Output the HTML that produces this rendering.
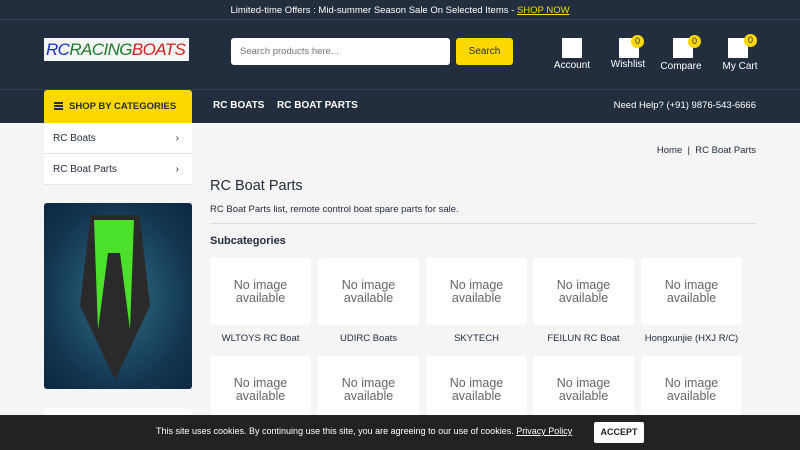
<!DOCTYPE html><html><head><meta charset="utf-8"><style>
*{margin:0;padding:0;box-sizing:border-box}
body{width:800px;height:450px;overflow:hidden;background:#f5f5f5;font-family:"Liberation Sans",sans-serif;position:relative;color:#222d3e}
.a{position:absolute}
.top{left:0;top:0;width:800px;height:20px;background:#222d3e;color:#fff;font-size:9.5px;text-align:center;line-height:22px;border-bottom:1px solid #333f52}
.top u{color:#ffd800}
.hdr{left:0;top:20px;width:800px;height:70px;background:#222d3e;border-bottom:1px solid #333f52}
.nav{left:0;top:90px;width:800px;height:33px;background:#222d3e}
.logo{left:44px;top:38px;width:145px;height:23px;background:#f4f6f6;font-style:italic;font-size:17px;line-height:23px;padding-left:2px;letter-spacing:-0.6px;overflow:hidden;white-space:nowrap}
.srch{left:231px;top:38px;width:219px;height:27px;background:#fff;border-radius:3px;font-size:9.5px;color:#777;line-height:27px;padding-left:9px}
.btn{left:456px;top:38px;width:57px;height:27px;background:#ffd800;border-radius:3px;font-size:10px;line-height:27px;text-align:center;color:#222d3e}
.ic{width:20px;height:20px;background:#fff}
.lb{color:#fff;font-size:10px;text-align:center;width:60px}
.bd{width:13px;height:13px;border-radius:50%;background:#ffd800;color:#222d3e;font-size:9px;text-align:center;line-height:13px}
.cat{left:44px;top:90px;width:148px;height:33px;background:#ffd800;border-radius:3px 3px 0 0;font-size:9.5px;font-weight:bold;line-height:34px;padding-left:25px}
.nl{color:#fff;font-size:10px;font-weight:bold;top:100px}
.mi{left:44px;width:148px;height:31px;background:#fff;font-size:10px;line-height:31px;padding-left:9px;border-bottom:1px solid #e5e5e5}
.mi span{position:absolute;right:13px}
.card{width:101px;height:67px;background:#fff;border-radius:3px;text-align:center;font-size:12.5px;color:#666;line-height:13px;padding-top:21px}
.cl{width:101px;text-align:center;font-size:9.5px}
.ck{left:0;top:415px;width:800px;height:35px;background:#222;color:#fff;font-size:10px}
</style></head><body>
<div class="a top">Limited-time Offers : Mid-summer Season Sale On Selected Items - <u>SHOP NOW</u></div>
<div class="a hdr"></div><div class="a nav"></div>
<div class="a logo"><span style="color:#1a2ccf">RC</span><span style="color:#1d7a2a">RACING</span><span style="color:#d41c1c">BOATS</span></div>
<div class="a srch">Search products here...</div>
<div class="a btn">Search</div>
<div class="a ic" style="left:562px;top:38px"></div><div class="a lb" style="left:542px;top:60px">Account</div>
<div class="a ic" style="left:619px;top:38px"></div><div class="a lb" style="left:598px;top:59px">Wishlist</div><div class="a bd" style="left:631px;top:35px">0</div>
<div class="a ic" style="left:673px;top:38px"></div><div class="a lb" style="left:651px;top:61px">Compare</div><div class="a bd" style="left:688px;top:35px">0</div>
<div class="a ic" style="left:728px;top:38px"></div><div class="a lb" style="left:710px;top:61px">My Cart</div><div class="a bd" style="left:744px;top:34px">0</div>
<div class="a cat">SHOP BY CATEGORIES</div>
<div class="a" style="left:54px;top:102px;width:9px;height:2px;background:#222d3e;box-shadow:0 3px 0 #222d3e,0 6px 0 #222d3e"></div>
<div class="a nl" style="left:213px;top:100px">RC BOATS</div>
<div class="a nl" style="left:277px;top:100px">RC BOAT PARTS</div>
<div class="a" style="right:44px;top:100px;color:#fff;font-size:9.5px">Need Help? (+91) 9876-543-6666</div>
<div class="a mi" style="top:123px">RC Boats<span>›</span></div>
<div class="a mi" style="top:154px">RC Boat Parts<span>›</span></div>
<div class="a" style="left:44px;top:203px;width:148px;height:186px;border-radius:3px;background:radial-gradient(ellipse at 50% 50%,#2f6c86,#123550 70%,#0c2640)"></div>
<div class="a" style="left:80px;top:215px;width:70px;height:165px;background:#2a2a2a;clip-path:polygon(15% 0,85% 0,100% 55%,50% 100%,0 55%)"></div>
<div class="a" style="left:94px;top:220px;width:40px;height:110px;background:#4be12a;clip-path:polygon(0 0,100% 0,90% 100%,65% 30%,35% 30%,10% 100%)"></div>
<div class="a" style="left:44px;top:408px;width:148px;height:20px;background:#fff;border-radius:3px"></div>
<div class="a" style="right:44px;top:145px;font-size:9.5px">Home &nbsp;| &nbsp;RC Boat Parts</div>
<div class="a" style="left:210px;top:178px;font-size:14.5px">RC Boat Parts</div>
<div class="a" style="left:210px;top:204px;font-size:9.5px">RC Boat Parts list, remote control boat spare parts for sale.</div>
<div class="a" style="left:210px;top:223px;width:546px;height:1px;background:#ddd"></div>
<div class="a" style="left:210px;top:235px;font-size:11px;font-weight:bold">Subcategories</div>
<div class="a card" style="left:210px;top:258px">No image<br>available</div>
<div class="a card" style="left:318px;top:258px">No image<br>available</div>
<div class="a card" style="left:426px;top:258px">No image<br>available</div>
<div class="a card" style="left:533px;top:258px">No image<br>available</div>
<div class="a card" style="left:641px;top:258px">No image<br>available</div>
<div class="a cl" style="left:210px;top:333px">WLTOYS RC Boat</div>
<div class="a cl" style="left:318px;top:333px">UDIRC Boats</div>
<div class="a cl" style="left:426px;top:333px">SKYTECH</div>
<div class="a cl" style="left:533px;top:333px">FEILUN RC Boat</div>
<div class="a cl" style="left:636px;top:333px;width:111px">Hongxunjie (HXJ R/C)</div>
<div class="a card" style="left:210px;top:356px">No image<br>available</div>
<div class="a card" style="left:318px;top:356px">No image<br>available</div>
<div class="a card" style="left:426px;top:356px">No image<br>available</div>
<div class="a card" style="left:533px;top:356px">No image<br>available</div>
<div class="a card" style="left:641px;top:356px">No image<br>available</div>
<div class="a ck"></div>
<div class="a" style="left:156px;top:426px;color:#fff;font-size:9px;white-space:nowrap">This site uses cookies. By continuing use this site, you are agreeing to our use of cookies. <u>Privacy Policy</u></div>
<div class="a" style="left:594px;top:422px;width:50px;height:21px;background:#fff;border-radius:2px;font-size:9px;font-weight:bold;text-align:center;line-height:21px;color:#222">ACCEPT</div>
</body></html>
